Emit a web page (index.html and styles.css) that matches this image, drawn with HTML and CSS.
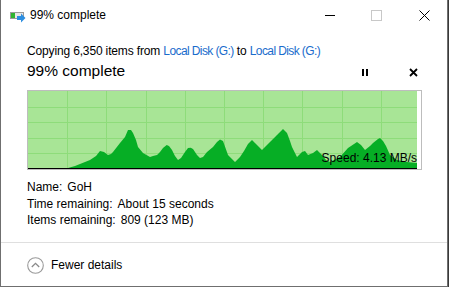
FILE: index.html
```html
<!DOCTYPE html>
<html>
<head>
<meta charset="utf-8">
<link rel="stylesheet" href="styles.css">
</head>
<body>
<div class="window">
  <div class="titlebar">
    <svg class="app-icon" width="17" height="16" viewBox="0 0 17 16">
      <rect x="1.5" y="4.5" width="13" height="6" fill="#e6e6e6" stroke="#9a9a9a"/>
      <rect x="2" y="5" width="4" height="5" fill="#2fb52f"/>
      <rect x="8" y="8" width="5" height="4" fill="#2c8ee0"/>
      <polygon points="12,5.5 16.5,10 12,14.5" fill="#2c8ee0"/>
    </svg>
    <span class="title">99% complete</span>
    <div class="caption-btns">
      <span class="cap-btn"><span class="min-line"></span></span>
      <span class="cap-btn"><span class="max-box"></span></span>
      <span class="cap-btn">
        <svg width="11" height="11" viewBox="0 0 11 11"><path d="M0.5 0.5 L10.5 10.5 M10.5 0.5 L0.5 10.5" stroke="#000" stroke-width="1"/></svg>
      </span>
    </div>
  </div>

  <div class="main">
    <div class="copying">Copying 6,350 items from <span class="link">Local Disk (G:)</span> to <span class="link">Local Disk (G:)</span></div>
    <div class="head-row">
      <span class="heading">99% complete</span>
      <div class="ctrls">
        <svg class="pause" width="6" height="7" viewBox="0 0 6 7"><rect x="0" y="0" width="2" height="7" fill="#000"/><rect x="4" y="0" width="2" height="7" fill="#000"/></svg>
        <svg class="stop" width="9" height="9" viewBox="0 0 9 9"><path d="M1 1 L8 8 M8 1 L1 8" stroke="#000" stroke-width="1.8"/></svg>
      </div>
    </div>

    <div class="graph">
      <svg class="chart" width="393" height="78" viewBox="28 91 393 78">
        <rect x="28" y="91" width="389" height="78" fill="#a8e596"/>
        <g stroke="#8edc7a" stroke-width="1">
          <line x1="67.5" y1="91" x2="67.5" y2="169"/>
          <line x1="106.5" y1="91" x2="106.5" y2="169"/>
          <line x1="146.5" y1="91" x2="146.5" y2="169"/>
          <line x1="185.5" y1="91" x2="185.5" y2="169"/>
          <line x1="224.5" y1="91" x2="224.5" y2="169"/>
          <line x1="263.5" y1="91" x2="263.5" y2="169"/>
          <line x1="302.5" y1="91" x2="302.5" y2="169"/>
          <line x1="342.5" y1="91" x2="342.5" y2="169"/>
          <line x1="381.5" y1="91" x2="381.5" y2="169"/>
          <line x1="28" y1="107.5" x2="417" y2="107.5"/>
          <line x1="28" y1="122.5" x2="417" y2="122.5"/>
          <line x1="28" y1="138.5" x2="417" y2="138.5"/>
          <line x1="28" y1="153.5" x2="417" y2="153.5"/>
        </g>
        <polygon fill="#06ae25" points="68,168 75,166 80,164 90,160 96,156 100,151 104,152 108,155 111,154 113,152 120,143 125,137 128,130 131,130 133,133 136,140 138,147 143,153 150,157 153,156 157,155 160,152 163,148 166.7,145 169,146 172,150 175,156 178,160 181,158 185,152 188,148 190.7,147.7 193,149 197,155 200,158 203,157 207,152 213,147 217,142 220,139.5 223,141 228,155 235,162 240,157 244,151 248,144 252,140 255,143 257,145 262,150 266,146 270,142 277,135 283,129 287,133 290,141 292,147 297,157 302,152 305,151 308,155 313,153 317,150 322,155 326,160 330,162 340,157 348,148 357,142 361,145 365,150 370,146 373,143 378,139 380,138 383,141 386,146 390,155 397,160 407,162 417,163 417,168"/>
        <rect x="28" y="168" width="389" height="1" fill="#000"/>
      </svg>
      <span class="speed">Speed: 4.13 MB/s</span>
    </div>

    <div class="details">
      <div class="drow"><span class="lbl">Name:</span><span class="val">GoH</span></div>
      <div class="drow"><span class="lbl">Time remaining:</span><span class="val">About 15 seconds</span></div>
      <div class="drow"><span class="lbl">Items remaining:</span><span class="val">809 (123 MB)</span></div>
    </div>
  </div>

  <div class="footer">
    <svg class="chev" width="17" height="17" viewBox="0 0 17 17">
      <circle cx="8.5" cy="8.5" r="7.8" fill="none" stroke="#9a9a9a" stroke-width="1.1"/>
      <path d="M4.8 10 L8.5 6.3 L12.2 10" fill="none" stroke="#8a8a8a" stroke-width="1.3"/>
    </svg>
    <span class="fewer">Fewer details</span>
  </div>
</div>
</body>
</html>
```

FILE: styles.css
```css
html, body {
  margin: 0;
  padding: 0;
}
body {
  background: #3a3a3a;
  width: 449px;
  height: 287px;
  overflow: hidden;
  font-family: "Liberation Sans", Arial, sans-serif;
  font-size: 12px;
  color: #000;
}
.window {
  box-sizing: border-box;
  width: 448px;
  height: 287px;
  background: #fff;
  border-left: 1px solid #6f6f6f;
  border-right: 1px solid #6f6f6f;
  border-bottom: 1px solid #6f6f6f;
  display: flex;
  flex-direction: column;
}
.titlebar {
  height: 30px;
  display: flex;
  align-items: center;
  position: relative;
}
.app-icon {
  margin-left: 8px;
  margin-top: 1px;
}
.title {
  margin-left: 4px;
  font-size: 12px;
  line-height: 16px;
}
.caption-btns {
  margin-left: auto;
  display: flex;
  height: 30px;
}
.cap-btn {
  width: 46px;
  height: 30px;
  display: flex;
  align-items: center;
  justify-content: center;
}
.min-line {
  width: 10px;
  height: 1px;
  background: #000;
  margin-left: -4px;
}
.max-box {
  width: 9px;
  height: 9px;
  border: 1px solid #c8c8c8;
  margin-left: -4px;
}
.main {
  padding: 13px 0 0 26px;
  flex: 1;
}
.copying {
  line-height: 16px;
  height: 16px;
  letter-spacing: -0.15px;
}
.link {
  color: #1a6ccc;
  letter-spacing: -0.6px;
}
.head-row {
  margin-top: 2px;
  height: 20px;
  display: flex;
  align-items: center;
}
.heading {
  font-size: 15.5px;
  line-height: 20px;
}
.ctrls {
  margin-left: auto;
  display: flex;
  align-items: center;
  margin-right: 29px;
  margin-top: 2px;
}
.pause {
  display: block;
  margin-right: 41px;
}
.stop {
  display: block;
}
.graph {
  position: relative;
  margin-top: 9px;
  width: 393px;
  height: 78px;
  border: 1px solid #bdbdbd;
}
.chart {
  display: block;
}
.speed {
  position: absolute;
  right: 4px;
  bottom: 4px;
  line-height: 14px;
  font-size: 12px;
}
.details {
  margin-top: 9px;
}
.drow {
  line-height: 16.5px;
  height: 16.5px;
}
.val {
  margin-left: 5px;
}
.footer {
  height: 43px;
  border-top: 1px solid #dfdfdf;
  display: flex;
  align-items: center;
  padding-left: 26px;
  margin-bottom: 0;
}
.chev {
  display: block;
  margin-top: 1px;
}
.fewer {
  margin-left: 7px;
  line-height: 16px;
}
```
